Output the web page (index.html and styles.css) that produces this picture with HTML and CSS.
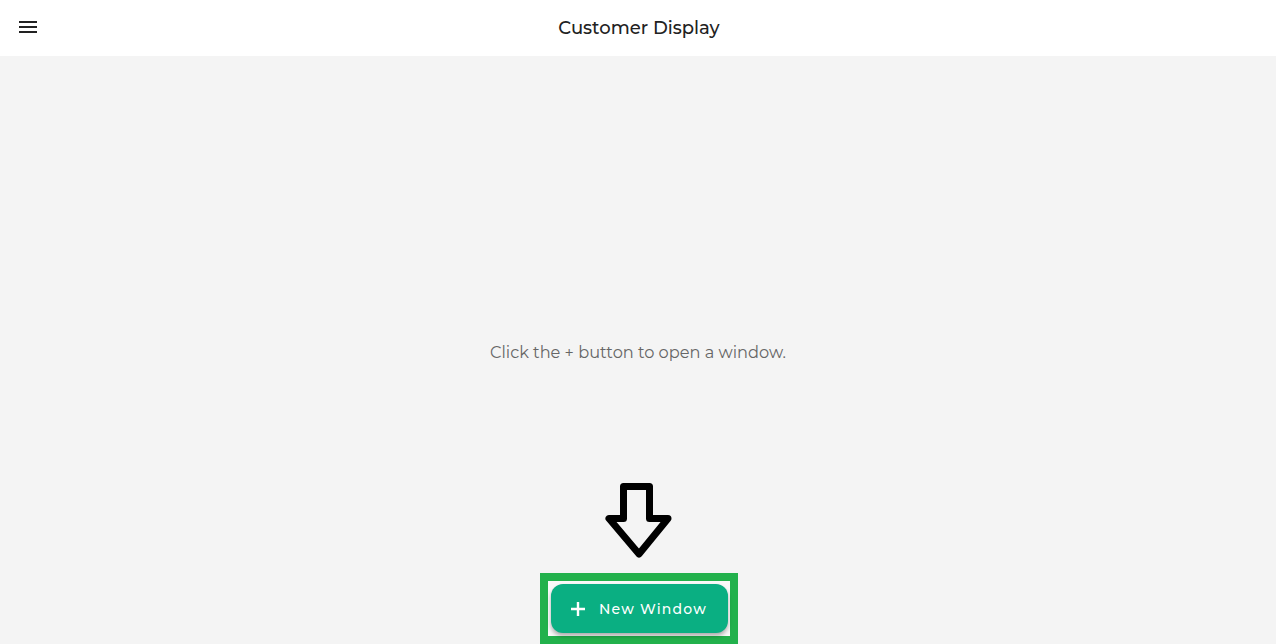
FILE: index.html
```html
<!doctype html>
<html lang="en">
<head>
  <meta charset="UTF-8">
  <meta name="viewport" content="width=device-width, initial-scale=1.0">
  <title>Customer Display</title>
  <link rel="stylesheet" href="styles.css">
</head>
<body>

<header class="topbar">
  <button class="menu-btn" aria-label="Menu">
    <svg width="24" height="24" viewBox="0 0 24 24"><path d="M3 18h18v-2H3v2zm0-5h18v-2H3v2zm0-7v2h18V6H3z" fill="#222"/></svg>
  </button>
  <h1 class="title">Customer Display</h1>
</header>

<main class="content">
  <p class="empty-msg">Click the + button to open a window.</p>

  <div class="hint">
    <svg class="hint-arrow" width="68" height="76" viewBox="0 0 68 76">
      <polygon points="18.5,3.5 44.5,3.5 44.5,35.5 63,35.5 34,71 4,35.5 18.5,35.5" fill="none" stroke="#000" stroke-width="7" stroke-linejoin="round"/>
    </svg>
    <div class="highlight">
      <button class="new-window">
        <svg width="16" height="16" viewBox="0 0 16 16"><path d="M8 1v14M1 8h14" stroke="#fff" stroke-width="2.4"/></svg>
        <span>New Window</span>
      </button>
    </div>
  </div>
</main>

</body>
</html>
```

FILE: styles.css
```css
body {
  margin: 0;
  font-family: 'Montserrat', 'DejaVu Sans', sans-serif;
  background-color: #f4f4f4;
  height: 644px;
  display: flex;
  flex-direction: column;
  overflow: hidden;
}

.topbar {
  height: 56px;
  background-color: #ffffff;
  display: flex;
  align-items: center;
  justify-content: center;
  position: relative;
}

.menu-btn {
  position: absolute;
  left: 16px;
  top: 15px;
  width: 24px;
  height: 24px;
  padding: 0;
  border: none;
  background: none;
}

.title {
  margin: 0;
  font-size: 18px;
  font-weight: 500;
  color: #222;
  padding-left: 2px;
}

.content {
  flex: 1;
  display: flex;
  align-items: center;
  justify-content: center;
  position: relative;
}

.empty-msg {
  margin: 4px 0 0;
  font-size: 16.2px;
  color: #666;
}

.hint {
  position: absolute;
  left: 540px;
  bottom: 0;
  width: 198px;
  display: flex;
  flex-direction: column;
  align-items: center;
}

.hint-arrow {
  display: block;
  margin-bottom: 14px;
}

.highlight {
  box-sizing: border-box;
  width: 198px;
  height: 71px;
  border: 8px solid #22b14c;
  background-color: #f9f9f9;
  padding: 3px;
}

.new-window {
  width: 177px;
  height: 49px;
  border: none;
  border-radius: 12px;
  background-color: #0aaf82;
  color: #fff;
  font-family: inherit;
  font-size: 14px;
  font-weight: 500;
  letter-spacing: 1.2px;
  display: flex;
  align-items: center;
  justify-content: center;
  gap: 13px;
  padding: 0 2px 0 0;
  box-shadow: 0 3px 4px rgba(0, 0, 0, 0.3);
}
```
